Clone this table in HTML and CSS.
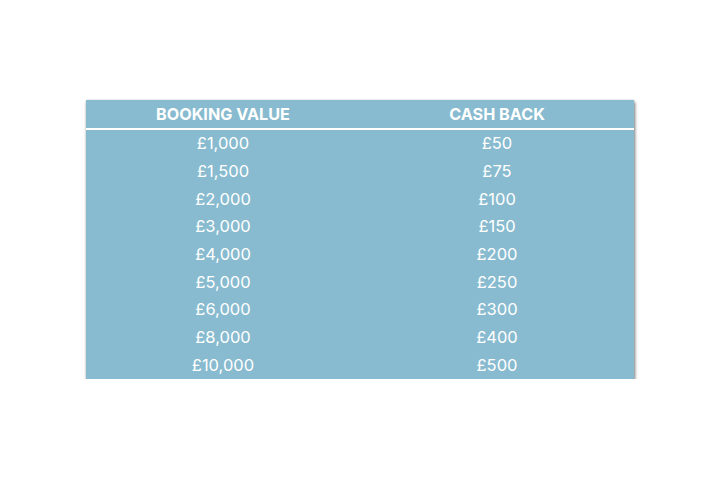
FILE: index.html
```html
<!DOCTYPE html>
<html>
<head>
<meta charset="utf-8">
<link rel="stylesheet" href="styles.css">
</head>
<body>
<div class="page">
  <div class="card">
    <table class="cash">
      <thead>
        <tr><th>BOOKING VALUE</th><th>CASH BACK</th></tr>
      </thead>
      <tbody>
        <tr><td>£1,000</td><td>£50</td></tr>
        <tr><td>£1,500</td><td>£75</td></tr>
        <tr><td>£2,000</td><td>£100</td></tr>
        <tr><td>£3,000</td><td>£150</td></tr>
        <tr><td>£4,000</td><td>£200</td></tr>
        <tr><td>£5,000</td><td>£250</td></tr>
        <tr><td>£6,000</td><td>£300</td></tr>
        <tr><td>£8,000</td><td>£400</td></tr>
        <tr><td>£10,000</td><td>£500</td></tr>
      </tbody>
    </table>
  </div>
</div>
</body>
</html>
```
FILE: styles.css
```css
html, body {
  margin: 0;
  padding: 0;
  background: #ffffff;
}
.page {
  padding: 100px 0 0 86px;
}
.card {
  width: 548px;
  background: #88bbcf;
  box-shadow: 1px 2px 3px rgba(0,0,0,0.5), 0 0 2px rgba(0,0,0,0.12);
}
.cash {
  width: 100%;
  border-collapse: collapse;
  font-family: Inter, "Liberation Sans", sans-serif;
  color: #ffffff;
  table-layout: fixed;
}
.cash th {
  font-weight: 700;
  font-size: 16.2px;
  height: 28px;
  padding: 0;
  border-bottom: 2px solid #ffffff;
  text-align: center;
  vertical-align: middle;
}
.cash td {
  font-size: 16.5px;
  font-weight: 400;
  height: 26.7px;
  padding: 0 0 1px;
  text-align: center;
  vertical-align: middle;
}
```
